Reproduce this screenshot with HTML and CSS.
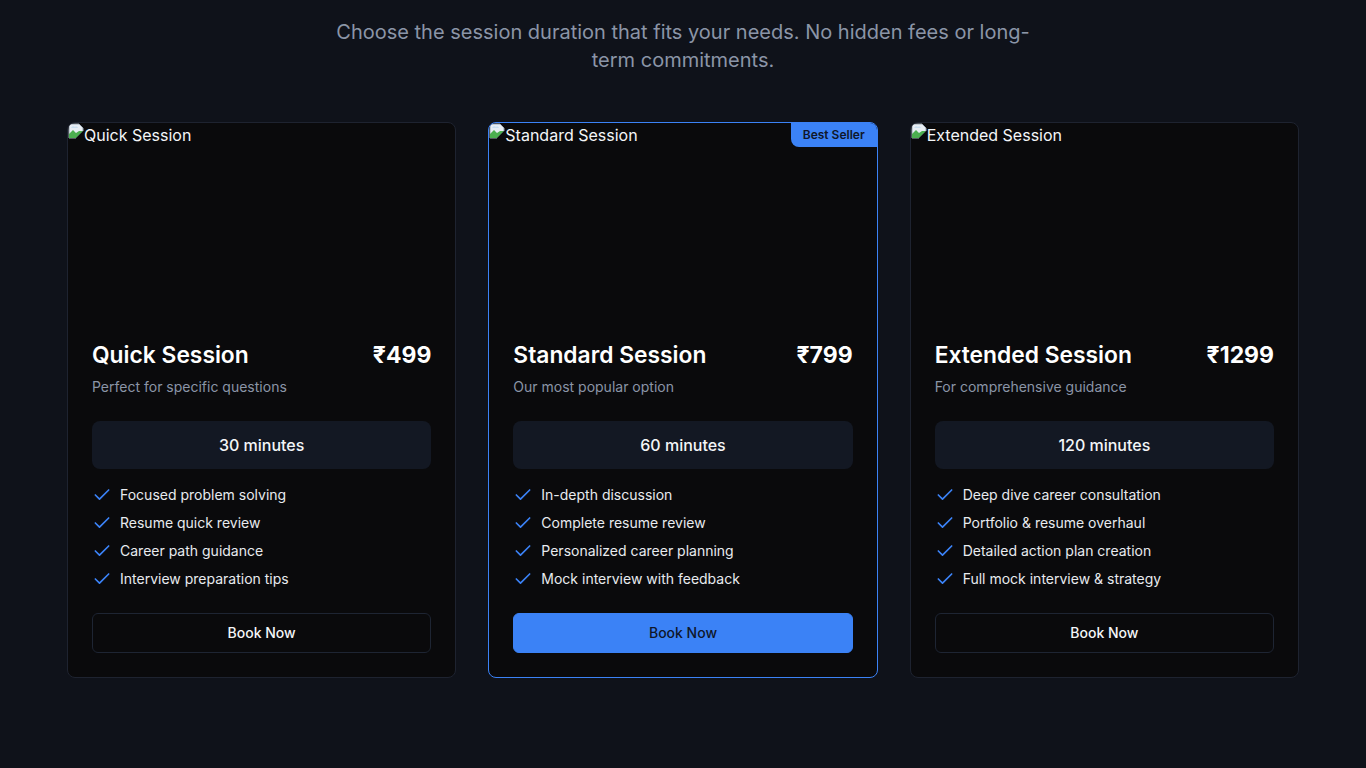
FILE: index.html
```html
<!DOCTYPE html>
<html lang="en">
<head>
<meta charset="utf-8">
<title>Session Pricing</title>
<link rel="stylesheet" href="styles.css">
</head>
<body>
<main class="page">
  <p class="intro">Choose the session duration that fits your needs. No hidden fees or long-term commitments.</p>
  <div class="grid">
    <article class="card">
      <div class="media">
        <span class="broken"><svg width="16" height="16" viewBox="0 0 16 16"><path d="M1 1h10l4 4v3L8 15H1z" fill="#e8eef4"/><path d="M1 1h10l4 4v3L8 15H1z" fill="none" stroke="#9aa6b2" stroke-width="1"/><path d="M1 11l4-4 3 3 3-2 4 0L8 15H1z" fill="#4caf50"/><path d="M3 5c1-2 3-2 4-1 1-1 3 0 3 1z" fill="#c9dff0"/><path d="M15 8L8 15h7z" fill="#0a0a0c"/></svg>Quick Session</span>
      </div>
      <div class="body">
        <div class="head"><h3 class="title">Quick Session</h3><span class="price">₹499</span></div>
        <p class="desc">Perfect for specific questions</p>
        <div class="duration">30 minutes</div>
        <ul class="features">
          <li><svg class="check" viewBox="0 0 24 24"><path d="M20 6L9 17l-5-5"/></svg>Focused problem solving</li>
          <li><svg class="check" viewBox="0 0 24 24"><path d="M20 6L9 17l-5-5"/></svg>Resume quick review</li>
          <li><svg class="check" viewBox="0 0 24 24"><path d="M20 6L9 17l-5-5"/></svg>Career path guidance</li>
          <li><svg class="check" viewBox="0 0 24 24"><path d="M20 6L9 17l-5-5"/></svg>Interview preparation tips</li>
        </ul>
        <button class="btn">Book Now</button>
      </div>
    </article>
    <article class="card featured">
      <span class="badge">Best Seller</span>
      <div class="media">
        <span class="broken"><svg width="16" height="16" viewBox="0 0 16 16"><path d="M1 1h10l4 4v3L8 15H1z" fill="#e8eef4"/><path d="M1 1h10l4 4v3L8 15H1z" fill="none" stroke="#9aa6b2" stroke-width="1"/><path d="M1 11l4-4 3 3 3-2 4 0L8 15H1z" fill="#4caf50"/><path d="M3 5c1-2 3-2 4-1 1-1 3 0 3 1z" fill="#c9dff0"/><path d="M15 8L8 15h7z" fill="#0a0a0c"/></svg>Standard Session</span>
      </div>
      <div class="body">
        <div class="head"><h3 class="title">Standard Session</h3><span class="price">₹799</span></div>
        <p class="desc">Our most popular option</p>
        <div class="duration">60 minutes</div>
        <ul class="features">
          <li><svg class="check" viewBox="0 0 24 24"><path d="M20 6L9 17l-5-5"/></svg>In-depth discussion</li>
          <li><svg class="check" viewBox="0 0 24 24"><path d="M20 6L9 17l-5-5"/></svg>Complete resume review</li>
          <li><svg class="check" viewBox="0 0 24 24"><path d="M20 6L9 17l-5-5"/></svg>Personalized career planning</li>
          <li><svg class="check" viewBox="0 0 24 24"><path d="M20 6L9 17l-5-5"/></svg>Mock interview with feedback</li>
        </ul>
        <button class="btn primary">Book Now</button>
      </div>
    </article>
    <article class="card">
      <div class="media">
        <span class="broken"><svg width="16" height="16" viewBox="0 0 16 16"><path d="M1 1h10l4 4v3L8 15H1z" fill="#e8eef4"/><path d="M1 1h10l4 4v3L8 15H1z" fill="none" stroke="#9aa6b2" stroke-width="1"/><path d="M1 11l4-4 3 3 3-2 4 0L8 15H1z" fill="#4caf50"/><path d="M3 5c1-2 3-2 4-1 1-1 3 0 3 1z" fill="#c9dff0"/><path d="M15 8L8 15h7z" fill="#0a0a0c"/></svg>Extended Session</span>
      </div>
      <div class="body">
        <div class="head"><h3 class="title">Extended Session</h3><span class="price">₹1299</span></div>
        <p class="desc">For comprehensive guidance</p>
        <div class="duration">120 minutes</div>
        <ul class="features">
          <li><svg class="check" viewBox="0 0 24 24"><path d="M20 6L9 17l-5-5"/></svg>Deep dive career consultation</li>
          <li><svg class="check" viewBox="0 0 24 24"><path d="M20 6L9 17l-5-5"/></svg>Portfolio &amp; resume overhaul</li>
          <li><svg class="check" viewBox="0 0 24 24"><path d="M20 6L9 17l-5-5"/></svg>Detailed action plan creation</li>
          <li><svg class="check" viewBox="0 0 24 24"><path d="M20 6L9 17l-5-5"/></svg>Full mock interview &amp; strategy</li>
        </ul>
        <button class="btn">Book Now</button>
      </div>
    </article>
  </div>
</main>
</body>
</html>
```

FILE: styles.css
```css
* { box-sizing: border-box; }
html, body { margin: 0; padding: 0; }
body {
  background: #0f121a;
  font-family: Inter, "Noto Sans", "Liberation Sans", sans-serif;
  color: #f4f6f8;
  min-height: 768px;
}
.page {
  max-width: 1280px;
  margin: 0 auto;
  padding: 18px 24px 0;
}
.intro {
  max-width: 700px;
  margin: 0 auto 48px;
  text-align: center;
  font-size: 20px;
  line-height: 28px;
  color: #8b95a7;
}
.grid {
  display: grid;
  grid-template-columns: repeat(3, 1fr);
  gap: 32px;
}
.card {
  position: relative;
  background: #0a0a0c;
  border: 1px solid #1e2330;
  border-radius: 8px;
  overflow: hidden;
}
.card.featured { border-color: #3b82f6; }
.badge {
  position: absolute;
  top: 0;
  right: 0;
  background: #3b82f6;
  color: #0f172a;
  font-size: 12px;
  font-weight: 600;
  line-height: 16px;
  padding: 4px 12px;
  border-bottom-left-radius: 8px;
}
.media {
  height: 192px;
}
.broken {
  display: inline-flex;
  align-items: flex-start;
  font-size: 16px;
  line-height: 24px;
  color: #f4f6f8;
}
.broken svg { flex: none; }
.body {
  padding: 24px;
}
.head {
  display: flex;
  justify-content: space-between;
  align-items: center;
}
.title {
  margin: 0;
  font-size: 22.8px;
  line-height: 32px;
  font-weight: 600;
  color: #fff;
}
.price {
  font-size: 23px;
  line-height: 32px;
  font-weight: 700;
  color: #fff;
}
.desc {
  margin: 6px 0 0;
  font-size: 14px;
  line-height: 20px;
  color: #8b95a7;
}
.duration {
  margin-top: 24px;
  background: #131823;
  border-radius: 8px;
  height: 48px;
  display: flex;
  align-items: center;
  justify-content: center;
  font-size: 16px;
  font-weight: 500;
  color: #f4f6f8;
}
.features {
  list-style: none;
  margin: 16px 0 0;
  padding: 0;
  display: flex;
  flex-direction: column;
  gap: 8px;
}
.features li {
  display: flex;
  align-items: center;
  gap: 8px;
  font-size: 14px;
  line-height: 20px;
  color: #e8ebef;
}
.check {
  width: 20px;
  height: 20px;
  flex: none;
  fill: none;
  stroke: #3b82f6;
  stroke-width: 2;
  stroke-linecap: round;
  stroke-linejoin: round;
}
.btn {
  display: block;
  width: 100%;
  margin-top: 24px;
  height: 40px;
  padding: 0 0 2px;
  border-radius: 6px;
  border: 1px solid #1e2533;
  background: #0a0a0c;
  color: #f4f6f8;
  font-family: inherit;
  font-size: 14px;
  font-weight: 500;
}
.btn.primary {
  background: #3b82f6;
  border-color: #3b82f6;
  color: #0f172a;
}
```
